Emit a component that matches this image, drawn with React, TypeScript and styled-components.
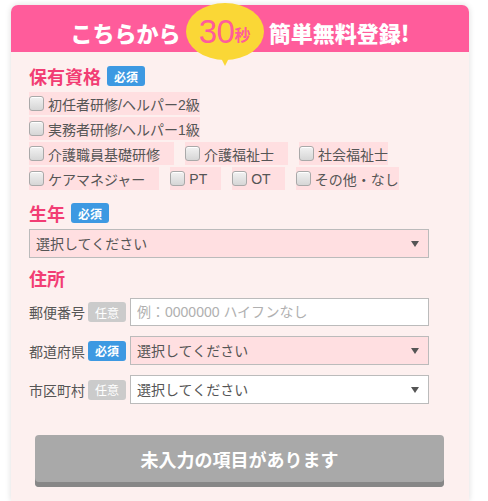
import React from 'react';
import styled, { createGlobalStyle } from 'styled-components';

const GlobalStyle = createGlobalStyle`
  body {
    margin: 0;
    background: #fff;
    font-family: 'Liberation Sans', 'Noto Sans CJK JP', sans-serif;
  }
  * {
    box-sizing: border-box;
  }
`;

const pink = '#ff5c9b';
const titlePink = '#f23d74';
const fieldPink = '#ffdfe1';

const Page = styled.div`
  padding: 5px 19px 0 11px;
`;

const Card = styled.section`
  background: #fdf0ef;
  border-radius: 7px 7px 0 0;
  box-shadow: 0 0 6px rgba(0, 0, 0, 0.14);
  min-height: 496px;
`;

const Header = styled.header`
  height: 47px;
  padding-top: 6px;
  background: ${pink};
  border-radius: 7px 7px 0 0;
  display: flex;
  justify-content: center;
  align-items: center;
  color: #fff;
  font-family: 'Noto Sans CJK JP', sans-serif;
  font-size: 22px;
  font-weight: 900;
  position: relative;
  z-index: 1;
`;

const Bubble = styled.span`
  position: relative;
  width: 78px;
  height: 57px;
  margin: 0 5px 0 5px;
  border-radius: 50%;
  background: #fad736;
  display: flex;
  align-items: center;
  justify-content: center;
  color: ${pink};
  flex-shrink: 0;

  &::after {
    content: '';
    position: absolute;
    left: 50%;
    bottom: -6px;
    margin-left: -4px;
    border-left: 4px solid transparent;
    border-right: 4px solid transparent;
    border-top: 8px solid #fad736;
  }
`;

const Seconds = styled.span`
  font-family: 'Liberation Sans', sans-serif;
  font-size: 33px;
  font-weight: 400;
  letter-spacing: -0.5px;
`;

const SecondsUnit = styled.span`
  font-family: 'Noto Sans CJK JP', sans-serif;
  font-size: 16px;
  font-weight: 700;
  margin-top: 5px;
`;

const Body = styled.div`
  padding: 14px 40px 0 18px;
`;

const TitleRow = styled.div<{ $gap?: number }>`
  display: flex;
  align-items: center;
  gap: 6px;
  height: 20px;
  margin-top: ${p => p.$gap ?? 0}px;
`;

const Title = styled.h2`
  margin: 0;
  color: ${titlePink};
  font-family: 'Noto Sans CJK JP', sans-serif;
  font-size: 18px;
  font-weight: 700;
  line-height: 20px;
`;

const Badge = styled.span<{ $optional?: boolean }>`
  display: inline-flex;
  align-items: center;
  justify-content: center;
  width: 38px;
  height: 20px;
  border-radius: 3px;
  background: ${p => (p.$optional ? '#cbcbcb' : '#3d99e2')};
  color: #fff;
  font-family: 'Noto Sans CJK JP', sans-serif;
  font-size: 12px;
  font-weight: ${p => (p.$optional ? 400 : 700)};
  flex-shrink: 0;
`;

const CheckList = styled.div`
  margin-top: 6px;
  display: flex;
  flex-direction: column;
  gap: 2px;
`;

const CheckRow = styled.div`
  display: flex;
  gap: 11px;
`;

const CheckItem = styled.label<{ $last?: boolean }>`
  display: flex;
  align-items: center;
  gap: 4px;
  height: 23px;
  padding-right: ${p => (p.$last ? 0 : 14)}px;
  background: ${fieldPink};
  color: #555;
  font-size: 14px;
  white-space: nowrap;
`;

const CheckBox = styled.input.attrs({ type: 'checkbox' })`
  appearance: none;
  margin: 0;
  width: 15px;
  height: 15px;
  border: 1px solid #a9a9a9;
  border-radius: 3px;
  background: linear-gradient(#f2f2f2, #d6d6d6);
  box-shadow: inset 0 1px 0 #fff;
`;

const SelectWrap = styled.div<{ $gap?: number }>`
  position: relative;
  flex: 1;
  margin-top: ${p => p.$gap ?? 0}px;
`;

const Select = styled.select<{ $required?: boolean }>`
  appearance: none;
  width: 100%;
  height: 29px;
  margin: 0;
  padding: 0 0 0 6px;
  border: 1px solid #bbb;
  border-radius: 0;
  background: ${p => (p.$required ? fieldPink : '#fff')};
  color: #555;
  font-family: 'Liberation Sans', 'Noto Sans CJK JP', sans-serif;
  font-size: 14px;
`;

const Arrow = styled.span`
  position: absolute;
  right: 10px;
  top: 12px;
  border-left: 4px solid transparent;
  border-right: 4px solid transparent;
  border-top: 6px solid #555;
  pointer-events: none;
`;

const AddressRows = styled.div`
  margin-top: 10px;
  display: flex;
  flex-direction: column;
  gap: 10px;
`;

const FieldRow = styled.div`
  display: flex;
  align-items: center;
  gap: 4px;
`;

const FieldLabel = styled.span`
  width: 55px;
  color: #555;
  font-size: 14px;
  white-space: nowrap;
`;

const TextInput = styled.input`
  flex: 1;
  height: 28px;
  margin: 0;
  padding: 0 0 0 6px;
  border: 1px solid #bbb;
  background: #fff;
  color: #555;
  font-family: 'Liberation Sans', 'Noto Sans CJK JP', sans-serif;
  font-size: 14px;

  &::placeholder {
    color: #b0b0b0;
  }
`;

const Footer = styled.div`
  padding: 31px 25px 0 24px;
`;

const SubmitButton = styled.button`
  width: 100%;
  height: 52px;
  padding: 0 0 5px;
  border: none;
  border-radius: 4px;
  background: #a9a9a9;
  box-shadow: inset 0 -5px 0 #878787;
  color: #fff;
  font-family: 'Noto Sans CJK JP', sans-serif;
  font-size: 18px;
  font-weight: 700;
`;

const checkRows: string[][] = [
  ['初任者研修/ヘルパー2級'],
  ['実務者研修/ヘルパー1級'],
  ['介護職員基礎研修', '介護福祉士', '社会福祉士'],
  ['ケアマネジャー', 'PT', 'OT', 'その他・なし'],
];

const Dropdown = ({ required, gap }: { required?: boolean; gap?: number }) => (
  <SelectWrap $gap={gap}>
    <Select $required={required} defaultValue="">
      <option value="">選択してください</option>
    </Select>
    <Arrow />
  </SelectWrap>
);

export default function App() {
  return (
    <Page>
      <GlobalStyle />
      <Card>
        <Header>
          <span>こちらから</span>
          <Bubble>
            <Seconds>30</Seconds>
            <SecondsUnit>秒</SecondsUnit>
          </Bubble>
          <span>簡単無料登録!</span>
        </Header>

        <Body>
          <TitleRow>
            <Title>保有資格</Title>
            <Badge>必須</Badge>
          </TitleRow>
          <CheckList>
            {checkRows.map((row, i) => (
              <CheckRow key={i}>
                {row.map((item, j) => (
                  <CheckItem key={item} $last={j === row.length - 1}>
                    <CheckBox />
                    {item}
                  </CheckItem>
                ))}
              </CheckRow>
            ))}
          </CheckList>

          <TitleRow $gap={13}>
            <Title>生年</Title>
            <Badge>必須</Badge>
          </TitleRow>
          <Dropdown required gap={6} />

          <TitleRow $gap={10}>
            <Title>住所</Title>
          </TitleRow>
          <AddressRows>
            <FieldRow>
              <FieldLabel>郵便番号</FieldLabel>
              <Badge $optional>任意</Badge>
              <TextInput placeholder="例：0000000 ハイフンなし" />
            </FieldRow>
            <FieldRow>
              <FieldLabel>都道府県</FieldLabel>
              <Badge>必須</Badge>
              <Dropdown required />
            </FieldRow>
            <FieldRow>
              <FieldLabel>市区町村</FieldLabel>
              <Badge $optional>任意</Badge>
              <Dropdown />
            </FieldRow>
          </AddressRows>
        </Body>

        <Footer>
          <SubmitButton>未入力の項目があります</SubmitButton>
        </Footer>
      </Card>
    </Page>
  );
}
